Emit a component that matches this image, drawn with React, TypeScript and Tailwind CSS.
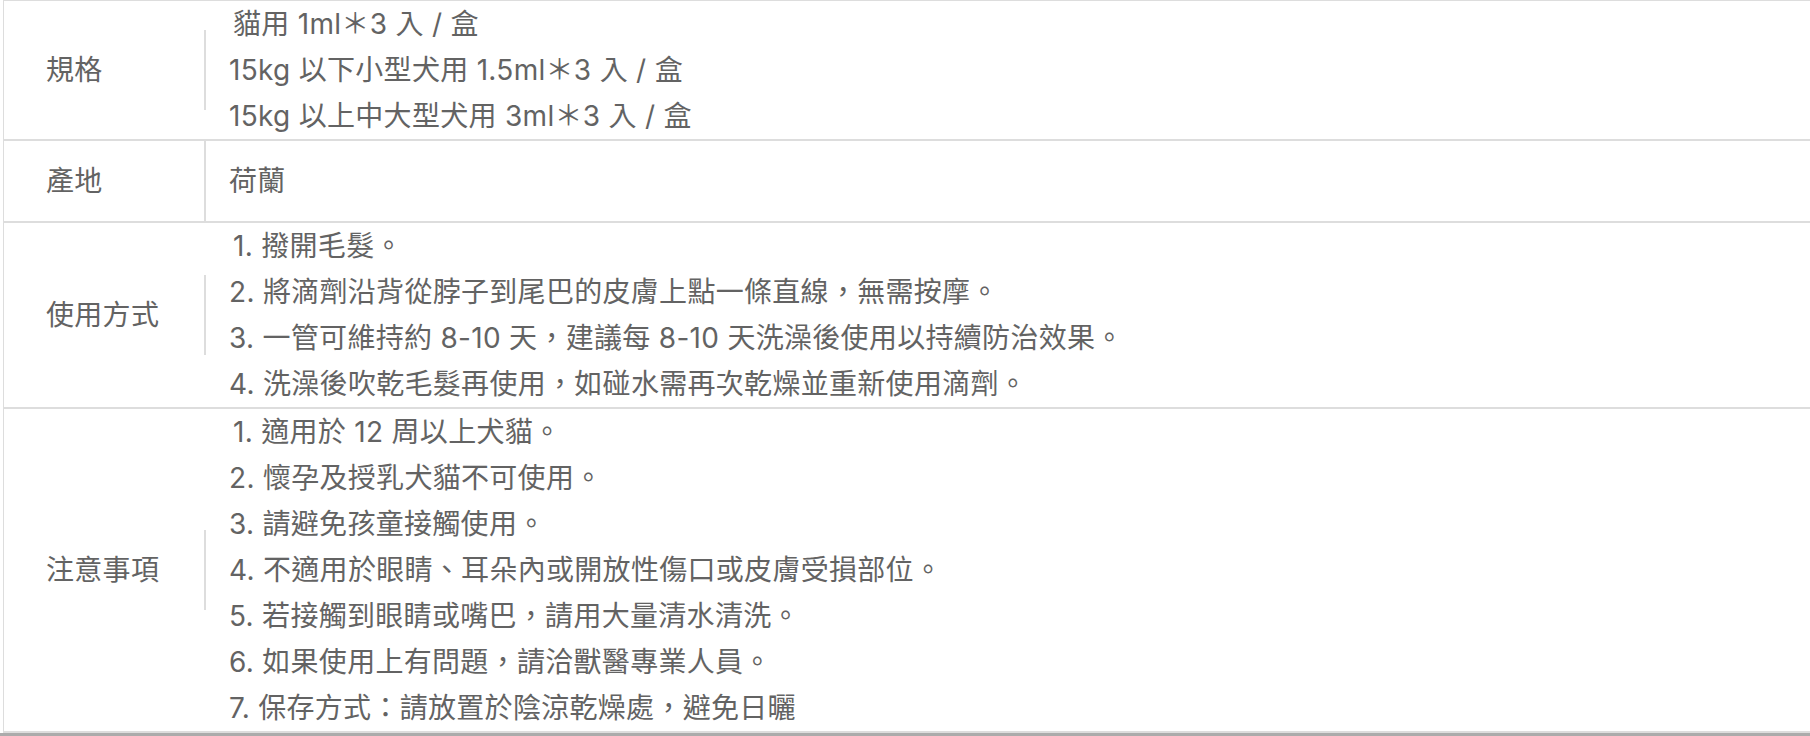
import React from "react";

type Row = { label: string; lines: string[] };

const rows: Row[] = [
  {
    label: "規格",
    lines: [
      "貓用 1ml＊3 入 / 盒",
      "15kg 以下小型犬用 1.5ml＊3 入 / 盒",
      "15kg 以上中大型犬用 3ml＊3 入 / 盒",
    ],
  },
  { label: "產地", lines: ["荷蘭"] },
  {
    label: "使用方式",
    lines: [
      "1. 撥開毛髮。",
      "2. 將滴劑沿背從脖子到尾巴的皮膚上點一條直線，無需按摩。",
      "3. 一管可維持約 8-10 天，建議每 8-10 天洗澡後使用以持續防治效果。",
      "4. 洗澡後吹乾毛髮再使用，如碰水需再次乾燥並重新使用滴劑。",
    ],
  },
  {
    label: "注意事項",
    lines: [
      "1. 適用於 12 周以上犬貓。",
      "2. 懷孕及授乳犬貓不可使用。",
      "3. 請避免孩童接觸使用。",
      "4. 不適用於眼睛、耳朵內或開放性傷口或皮膚受損部位。",
      "5. 若接觸到眼睛或嘴巴，請用大量清水清洗。",
      "6. 如果使用上有問題，請洽獸醫專業人員。",
      "7. 保存方式：請放置於陰涼乾燥處，避免日曬",
    ],
  },
];

export default function App() {
  return (
    <div className="w-[1810px] h-[736px] bg-white overflow-hidden flex flex-col font-['Inter','Noto_Sans_CJK_TC',sans-serif] text-[28px] tracking-[0.3px] text-[#636363]">
      <div className="ml-[3px] border-l border-t border-[#dddddd] flex-1 flex flex-col">
        {rows.map((r, i) => (
          <div
            key={i}
            className="flex items-center border-b-2 border-[#dddddd] min-h-[80px]"
          >
            <div className="w-[202px] h-[80px] shrink-0 flex items-center pl-[42px] border-r-2 border-[#dddddd]">
              {r.label}
            </div>
            <div className="pl-[23px] flex flex-col leading-[46px]">
              {r.lines.map((l, j) => (
                <div key={j} className={j === 0 && r.lines.length > 1 ? "pl-[4px]" : ""}>
                  {l}
                </div>
              ))}
            </div>
          </div>
        ))}
        <div className="flex-1" />
      </div>
      <div className="h-[4px] bg-[#ababab]" />
    </div>
  );
}
